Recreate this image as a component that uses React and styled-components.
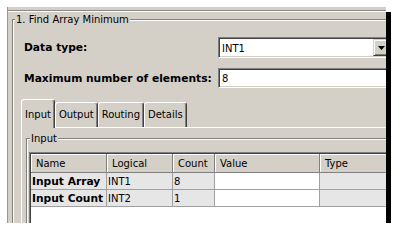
import React from 'react';
import styled, { createGlobalStyle } from 'styled-components';

const FACE = '#d4d0c8';
const SHADOW = '#808080';
const DARK = '#404040';

const GlobalStyle = createGlobalStyle`
	html, body {
		margin: 0;
		background: #fff;
	}
	body {
		font-family: "DejaVu Sans", Tahoma, sans-serif;
		font-size: 10px;
		line-height: 13px;
		color: #000;
	}
`;

const Page = styled.div`
	padding: 7px 0 0 7px;
`;

const Window = styled.div`
	box-sizing: border-box;
	width: 379px;
	height: 216px;
	overflow: hidden;
	background: ${ FACE };
	border-left: 1px solid #9a9893;
	box-shadow: 5px 5px 0 #000;
`;

const Rule = styled.div`
	margin-top: 3px;
	border-top: 1px solid #8a8884;
	border-bottom: 1px solid #fff;
`;

const GroupBox = styled.div`
	width: ${ ( { width } ) => width }px;
	margin: ${ ( { top } ) => top }px 0 0 ${ ( { left } ) => left }px;
	padding-left: ${ ( { inset } ) => inset }px;
	border: 1px solid ${ SHADOW };
	box-shadow: inset 1px 1px 0 #fff;
`;

const Legend = styled.div`
	display: table;
	margin: -7px 0 0 ${ ( { shift } ) => shift }px;
	padding: 0 1px;
	background: ${ FACE };
`;

const Form = styled.div`
	display: grid;
	grid-template-columns: 197px 173px;
	row-gap: 10px;
	align-items: center;
	margin-top: 11px;
`;

const Label = styled.div`
	padding-left: 3px;
	font-family: "DejaVu Sans", sans-serif;
	font-weight: bold;
	font-size: 10.7px;
`;

const Field = styled.div`
	box-sizing: border-box;
	display: flex;
	align-items: center;
	height: ${ ( { tall } ) => ( tall ? 21 : 20 ) }px;
	padding-left: 3px;
	background: #fff;
	border: 1px solid;
	border-color: ${ SHADOW } #fff #fff ${ SHADOW };
	box-shadow: inset 1px 1px 0 ${ DARK }, inset -1px -1px 0 ${ FACE };
`;

const Value = styled.span`
	flex: 1;
	padding-top: 1px;
`;

const DropButton = styled.div`
	box-sizing: border-box;
	display: flex;
	align-items: center;
	justify-content: center;
	width: 16px;
	height: 17px;
	margin-right: 1px;
	background: ${ FACE };
	border: 1px solid;
	border-color: ${ FACE } ${ DARK } ${ DARK } ${ FACE };
	box-shadow: inset 1px 1px 0 #fff, inset -1px -1px 0 ${ SHADOW };
`;

const TabStrip = styled.div`
	display: flex;
	align-items: flex-end;
	margin-top: 11px;
`;

const Tab = styled.div`
	box-sizing: border-box;
	position: relative;
	z-index: ${ ( { active } ) => ( active ? 1 : 0 ) };
	display: flex;
	align-items: center;
	height: ${ ( { active } ) => ( active ? 29 : 25 ) }px;
	margin-bottom: ${ ( { active } ) => ( active ? -1 : 0 ) }px;
	padding: 0 3px ${ ( { active } ) => ( active ? 0 : 1 ) }px;
	background: ${ FACE };
	border: 1px solid #fff;
	border-right-color: ${ DARK };
	border-bottom: none;
	border-radius: 3px 3px 0 0;
	box-shadow: inset -1px 0 0 ${ SHADOW };
`;

const Panel = styled.div`
	padding-left: 4px;
	border-top: 1px solid #fff;
	border-left: 1px solid #fff;
	height: 120px;
`;

const TableFrame = styled.div`
	margin-top: 7px;
	border-top: 1px solid ${ SHADOW };
	border-left: 1px solid ${ SHADOW };
`;

const TableInner = styled.div`
	border-top: 1px solid ${ DARK };
	border-left: 1px solid ${ DARK };
	background: #fff;
	height: 100px;
`;

const Row = styled.div`
	display: grid;
	grid-template-columns: 76px 66px 42px 105px 80px;
`;

const HeadCell = styled.div`
	box-sizing: border-box;
	height: 19px;
	display: flex;
	align-items: center;
	padding-left: 5px;
	background: ${ FACE };
	border-right: 1px solid ${ SHADOW };
	border-bottom: 1px solid ${ SHADOW };
	box-shadow: inset 1px 1px 0 #fff;
`;

const Cell = styled.div`
	box-sizing: border-box;
	height: 17px;
	display: flex;
	align-items: center;
	padding-left: 1px;
	background: ${ ( { white } ) => ( white ? '#fff' : '#e6e6e6' ) };
	border-right: 1px solid #a0a0a0;
	border-bottom: 1px solid #a0a0a0;
	font-weight: ${ ( { bold } ) => ( bold ? 'bold' : 'normal' ) };
	font-size: ${ ( { bold } ) => ( bold ? 10.7 : 10 ) }px;
`;

const TABS = [ 'Input', 'Output', 'Routing', 'Details' ];
const COLUMNS = [ 'Name', 'Logical', 'Count', 'Value', 'Type' ];
const ROWS = [
	[ 'Input Array', 'INT1', '8' ],
	[ 'Input Count', 'INT2', '1' ],
];

const Arrow = () => (
	<svg width="7" height="4" viewBox="0 0 7 4">
		<path d="M0 0h7L3.5 4z" fill="#000" />
	</svg>
);

const App = () => (
	<Page>
		<GlobalStyle />
		<Window>
			<Rule />
			<GroupBox width={ 420 } top={ 7 } left={ 4 } inset={ 8 }>
				<Legend shift={ -6 }>1. Find Array Minimum</Legend>
				<Form>
					<Label>Data type:</Label>
					<Field tall>
						<Value>INT1</Value>
						<DropButton>
							<Arrow />
						</DropButton>
					</Field>
					<Label>Maximum number of elements:</Label>
					<Field>
						<Value>8</Value>
					</Field>
				</Form>
				<TabStrip>
					{ TABS.map( ( tab, index ) => (
						<Tab key={ tab } active={ index === 0 }>
							{ tab }
						</Tab>
					) ) }
				</TabStrip>
				<Panel>
					<GroupBox width={ 420 } top={ 10 } left={ 0 } inset={ 2 }>
						<Legend shift={ 1 }>Input</Legend>
						<TableFrame>
							<TableInner>
								<Row>
									{ COLUMNS.map( ( col ) => (
										<HeadCell key={ col }>{ col }</HeadCell>
									) ) }
								</Row>
								{ ROWS.map( ( [ name, logical, count ] ) => (
									<Row key={ name }>
										<Cell bold>{ name }</Cell>
										<Cell>{ logical }</Cell>
										<Cell>{ count }</Cell>
										<Cell white />
										<Cell />
									</Row>
								) ) }
							</TableInner>
						</TableFrame>
					</GroupBox>
				</Panel>
			</GroupBox>
		</Window>
	</Page>
);

export default App;
